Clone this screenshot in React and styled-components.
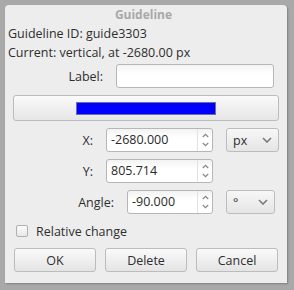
import React from 'react';
import styled, { createGlobalStyle } from 'styled-components';

const GlobalStyle = createGlobalStyle`
  html, body {
    margin: 0;
    padding: 0;
    background: #a9a9a9;
  }
  body {
    font-family: "Open Sans", "DejaVu Sans", sans-serif;
    font-size: 12px;
    color: #2e2e2e;
  }
`

const Screen = styled.div`
  width: 294px;
  height: 290px;
  padding: 5px 7px 7px 5px;
  box-sizing: border-box;
`

const Dialog = styled.div`
  width: 282px;
  height: 278px;
  box-sizing: border-box;
  background: #ededed;
  border-radius: 4px 4px 0 0;
  box-shadow: 1px 1px 2px rgba(0, 0, 0, 0.25);
  padding: 0 8px 0 3px;
  display: flex;
  flex-direction: column;
`

const Title = styled.div`
  text-align: center;
  font-weight: bold;
  color: #a8a8a8;
  font-size: 12px;
  height: 19px;
  line-height: 19px;
`

const InfoLine = styled.div`
  height: 19px;
  line-height: 19px;
  font-size: 12.5px;
`

// right aligned form row, $pr is the gap left at the right edge
const FormRow = styled.div`
  display: flex;
  align-items: center;
  justify-content: flex-end;
  height: 24px;
  margin-top: ${p => p.$mt || 0}px;
  padding-right: ${p => p.$pr || 0}px;
`

const ColorRow = styled.div`
  display: flex;
  height: 26px;
  margin-top: 7px;
  padding-left: 5px;
`

const CheckRow = styled.div`
  display: flex;
  align-items: center;
  height: 22px;
  margin-top: 6px;
`

const FieldLabel = styled.span`
  font-size: 12.5px;
  margin-right: 13px;
`

const TextBox = styled.div`
  width: ${p => p.$w}px;
  height: 24px;
  box-sizing: border-box;
  border: 1px solid #b6b6b6;
  border-radius: 3px;
  background: linear-gradient(to bottom, #f3f3f3, #ffffff 40%);
  margin-right: 5px;
`

const ColorButton = styled.div`
  width: 266px;
  height: 26px;
  box-sizing: border-box;
  border: 1px solid #bcbcbc;
  border-radius: 3px;
  background: linear-gradient(to bottom, #fafafa, #e6e6e6);
  display: flex;
  align-items: center;
  justify-content: center;
`

const Swatch = styled.div`
  width: 140px;
  height: 13px;
  box-sizing: border-box;
  background: #0000ff;
  border: 1px solid #6d6dab;
`

const Spin = styled.div`
  width: ${p => p.$w}px;
  height: 24px;
  box-sizing: border-box;
  border: 1px solid #b6b6b6;
  border-radius: 3px;
  background: linear-gradient(to bottom, #f3f3f3, #ffffff 40%);
  display: flex;
  align-items: stretch;
`

const SpinValue = styled.span`
  flex: 1;
  font-size: 12.5px;
  line-height: 22px;
  padding-left: 4px;
  color: #2a2a2a;
`

const SpinArrows = styled.div`
  width: 14px;
  border-left: 1px solid #e2e2e2;
  display: flex;
  flex-direction: column;
  align-items: center;
  justify-content: space-around;
  padding: 2px 0;
`

const Combo = styled.div`
  width: ${p => p.$w}px;
  height: 24px;
  margin-left: 13px;
  box-sizing: border-box;
  border: 1px solid #bcbcbc;
  border-radius: 3px;
  background: linear-gradient(to bottom, #f7f7f7, #e5e5e5);
  display: flex;
  align-items: center;
  justify-content: space-between;
  padding: 0 6px 0 6px;
  font-size: 12.5px;
`

const CheckBox = styled.div`
  width: 12px;
  height: 12px;
  box-sizing: border-box;
  border: 1px solid #b0b0b0;
  border-radius: 2px;
  background: linear-gradient(to bottom, #fbfbfb, #e8e8e8);
  margin: 0 8px 0 8px;
`

const CheckLabel = styled.span`
  font-size: 12.5px;
`

const ButtonRow = styled.div`
  display: grid;
  grid-template-columns: repeat(3, 82px);
  column-gap: 9px;
  padding-left: 6px;
  margin-top: 6px;
`

const Button = styled.div`
  height: 24px;
  box-sizing: border-box;
  border: 1px solid #bcbcbc;
  border-radius: 3px;
  background: linear-gradient(to bottom, #fafafa, #e4e4e4);
  display: flex;
  align-items: center;
  justify-content: center;
  font-size: 12.5px;
`

const Chevron = ({ up }) => (
  <svg width={7} height={5} viewBox="0 0 7 5">
    <path
      d={up ? 'M0.8 4 L3.5 1.3 L6.2 4' : 'M0.8 1 L3.5 3.7 L6.2 1'}
      fill="none"
      stroke="#8a8a8a"
      strokeWidth="1.3"
    />
  </svg>
)

const DropArrow = () => (
  <svg width={10} height={6} viewBox="0 0 10 6">
    <path d="M1 1 L5 5 L9 1" fill="none" stroke="#7a7a7a" strokeWidth="1.6" />
  </svg>
)

const SpinBox = ({ w, value }) => (
  <Spin $w={w}>
    <SpinValue>{value}</SpinValue>
    <SpinArrows>
      <Chevron up />
      <Chevron />
    </SpinArrows>
  </Spin>
)

const App = () => {
  return (
    <Screen>
      <GlobalStyle />
      <Dialog>
        <Title>Guideline</Title>
        <InfoLine>Guideline ID: guide3303</InfoLine>
        <InfoLine>Current: vertical, at -2680.00 px</InfoLine>

        <FormRow $mt={2}>
          <FieldLabel>Label:</FieldLabel>
          <TextBox $w={158} />
        </FormRow>

        <ColorRow>
          <ColorButton>
            <Swatch />
          </ColorButton>
        </ColorRow>

        <FormRow $mt={7}>
          <FieldLabel>X:</FieldLabel>
          <SpinBox w={107} value="-2680.000" />
          <Combo $w={53}>
            <span>px</span>
            <DropArrow />
          </Combo>
        </FormRow>

        <FormRow $mt={7} $pr={66}>
          <FieldLabel>Y:</FieldLabel>
          <SpinBox w={107} value="805.714" />
        </FormRow>

        <FormRow $mt={7} $pr={4}>
          <FieldLabel>Angle:</FieldLabel>
          <SpinBox w={86} value="-90.000" />
          <Combo $w={49}>
            <span>°</span>
            <DropArrow />
          </Combo>
        </FormRow>

        <CheckRow>
          <CheckBox />
          <CheckLabel>Relative change</CheckLabel>
        </CheckRow>

        <ButtonRow>
          <Button>OK</Button>
          <Button>Delete</Button>
          <Button>Cancel</Button>
        </ButtonRow>
      </Dialog>
    </Screen>
  );
}

export default App;
